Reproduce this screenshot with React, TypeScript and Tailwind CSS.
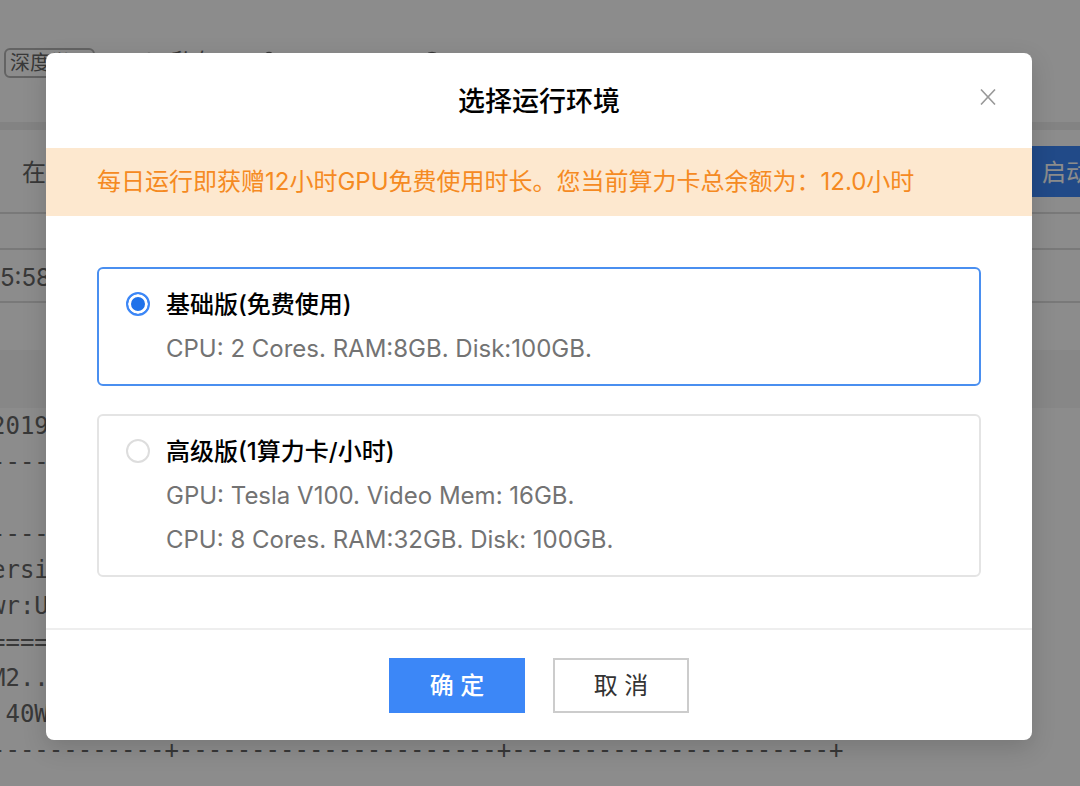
import { useState } from "react";
import { LuClock3, LuLock, LuUser } from "react-icons/lu";

const plans = [
  {
    id: "basic",
    title: "基础版(免费使用)",
    specs: ["CPU: 2 Cores. RAM:8GB. Disk:100GB."],
  },
  {
    id: "advanced",
    title: "高级版(1算力卡/小时)",
    specs: [
      "GPU: Tesla V100. Video Mem: 16GB.",
      "CPU: 8 Cores. RAM:32GB. Disk: 100GB.",
    ],
  },
];

const dash = (n: number) => "-".repeat(n);

const output = [
  "2019",
  dash(4),
  "",
  dash(4),
  "ersi",
  "wr:U",
  "=".repeat(4),
  "M2..",
  " 40W",
  `${dash(12)}+${dash(22)}+${dash(22)}+`,
].join("\n");

function NotebookPage() {
  return (
    <div className="h-screen overflow-hidden bg-white text-2xl text-[#666]">
      {/* Project info */}
      <div className="flex h-[122px] items-start gap-11 pl-1 pt-12 text-[22px] leading-[26px]">
        <span className="w-[91px] overflow-hidden whitespace-nowrap rounded-md border-2 border-[#b5b5b5] px-1 text-xl leading-[26px]">深度学习</span>
        <span className="flex items-center gap-3"><LuUser className="size-5" />私有</span>
        <span className="flex items-center gap-3"><LuLock className="size-5" />Python3</span>
        <span className="flex items-center gap-4"><LuClock3 className="size-5" />2019-07-07 11:00:00</span>
      </div>
      <div className="h-2 bg-[#eee]" />

      {/* Toolbar */}
      <div className="flex h-[84px] items-center justify-between border-b-2 border-[#ddd] pl-[22px]">
        <span className="pt-1">在线运行</span>
        <button type="button" className="h-[51px] w-[54px] overflow-hidden whitespace-nowrap bg-[#3c87f7] pl-4 pt-1 text-left text-white">启动</button>
      </div>
      <div className="mt-[34px] flex h-[55px] items-center border-y-2 border-[#ddd] pt-1">5:58</div>
      <div className="mt-[47px] h-[58px] bg-[#f6f6f6]" />
      <pre className="-ml-[9px] font-['DejaVu_Sans_Mono',monospace] leading-9">{output}</pre>
    </div>
  );
}

export default function App() {
  const [selected, setSelected] = useState("basic");

  return (
    <div className="relative font-['Inter','Noto_Sans_CJK_SC',sans-serif]">
      <NotebookPage />

      {/* Overlay */}
      <div className="absolute inset-0 bg-black/45 pl-[46px] pr-12 pt-[53px]">
        <div role="dialog" aria-labelledby="dialog-title" className="relative rounded-lg bg-white shadow-[0_8px_24px_rgba(0,0,0,0.15)]">
          <h2 id="dialog-title" className="pb-[30px] pt-[33px] text-center text-[27px] font-medium leading-8 text-black">
            选择运行环境
          </h2>
          <button type="button" aria-label="关闭" className="absolute right-9 top-9 text-[#999]">
            <svg viewBox="0 0 16 16" className="size-4" fill="none" stroke="currentColor" strokeWidth="1.6">
              <path d="M1 0.5 15 15.5M15 0.5 1 15.5" />
            </svg>
          </button>

          <p className="bg-[#fde8cf] px-[51px] py-4 text-2xl leading-9 text-[#f58a22]">
            每日运行即获赠12小时GPU免费使用时长。您当前算力卡总余额为：12.0小时
          </p>

          {/* Plans */}
          <div className="space-y-7 px-[51px] py-[51px]">
            {plans.map((plan) => (
              <label
                key={plan.id}
                className="flex gap-4 rounded-md border-2 border-[#e4e4e4] px-[27px] pb-[13px] pt-[14px] has-checked:border-[#4a8ff0]"
              >
                <input
                  type="radio"
                  name="plan"
                  checked={selected === plan.id}
                  onChange={() => setSelected(plan.id)}
                  className="mt-[9px] size-6 shrink-0 appearance-none rounded-full border-2 border-[#ddd] checked:border-[#3c87f7] checked:bg-[#1f72ea] checked:shadow-[inset_0_0_0_3px_white]"
                />
                <span className="text-2xl leading-[44px] text-[#737373]">
                  <span className="block font-medium text-black">{plan.title}</span>
                  {plan.specs.map((spec) => (
                    <span key={spec} className="block">{spec}</span>
                  ))}
                </span>
              </label>
            ))}
          </div>

          {/* Actions */}
          <div className="flex justify-center gap-7 border-t-2 border-[#eee] pb-[27px] pt-7 text-2xl">
            <button type="button" className="h-[55px] w-[136px] bg-[#3c87f7] font-medium text-white">确 定</button>
            <button type="button" className="h-[55px] w-[136px] border-2 border-[#ccc] text-[#333]">取 消</button>
          </div>
        </div>
      </div>
    </div>
  );
}
